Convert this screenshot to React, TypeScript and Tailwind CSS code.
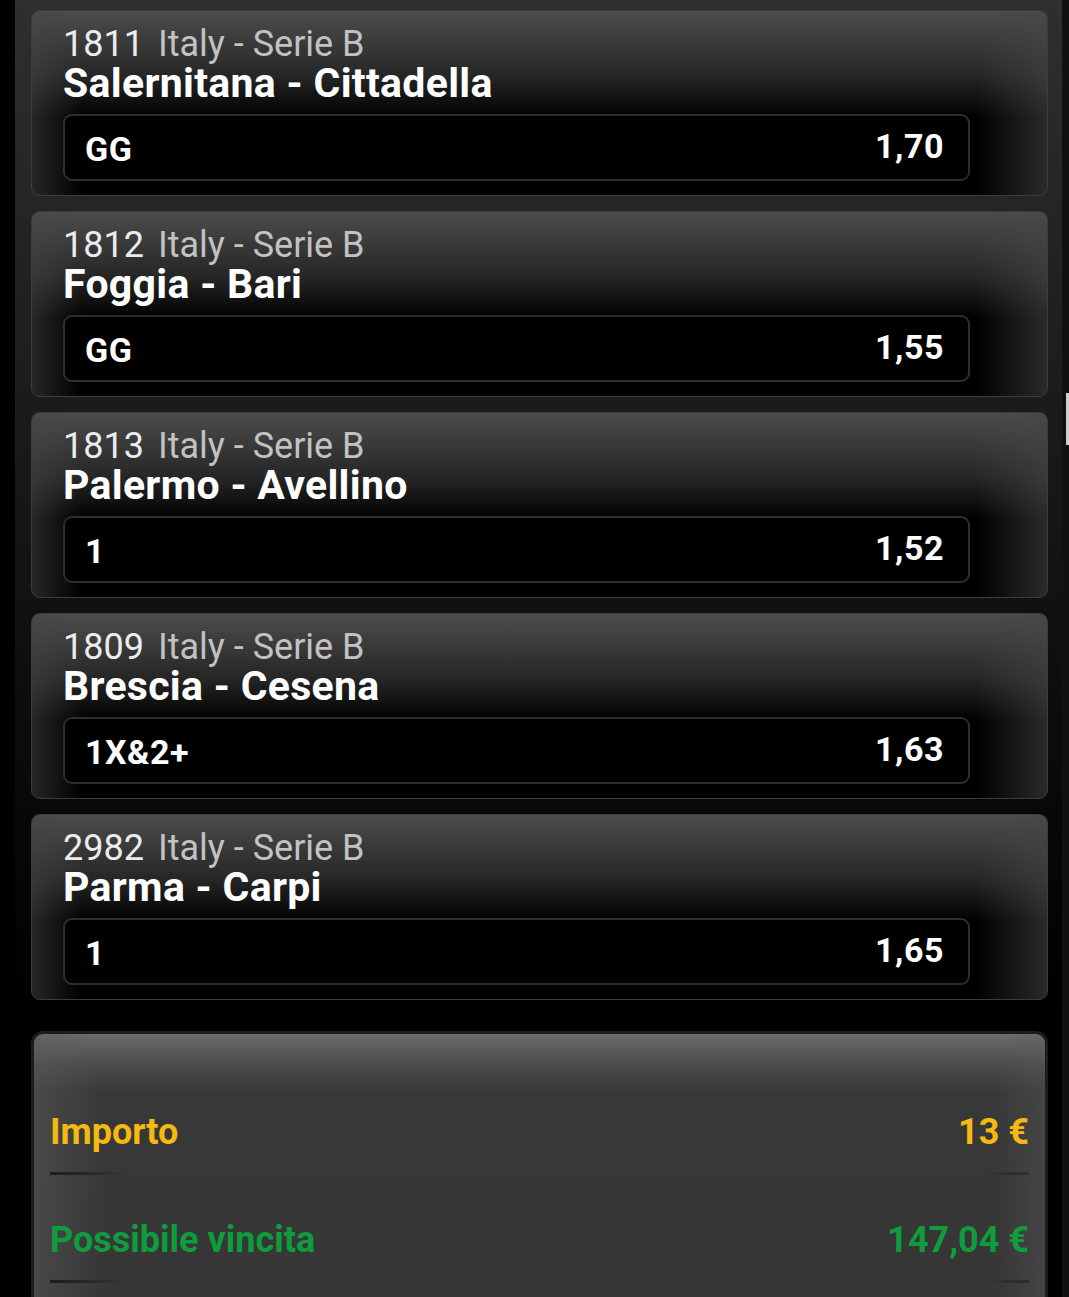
import React from "react";

type Bet = {
  code: string;
  league: string;
  match: string;
  pick: string;
  odd: string;
};

const bets: Bet[] = [
  { code: "1811", league: "Italy - Serie B", match: "Salernitana - Cittadella", pick: "GG", odd: "1,70" },
  { code: "1812", league: "Italy - Serie B", match: "Foggia - Bari", pick: "GG", odd: "1,55" },
  { code: "1813", league: "Italy - Serie B", match: "Palermo - Avellino", pick: "1", odd: "1,52" },
  { code: "1809", league: "Italy - Serie B", match: "Brescia - Cesena", pick: "1X&2+", odd: "1,63" },
  { code: "2982", league: "Italy - Serie B", match: "Parma - Carpi", pick: "1", odd: "1,65" },
];

function BetCard({ bet }: { bet: Bet }) {
  return (
    <div className="h-[186px] rounded-[9px] border border-[#3c3c3c] bg-[linear-gradient(to_right,rgba(70,70,70,0.55),rgba(0,0,0,0)_5%,rgba(0,0,0,0)_93%,rgba(70,70,70,0.6)),linear-gradient(to_bottom,#4c4c4c,#262626_35%,#000_58%,#000)] pl-[31px] pt-[15px]">
      <div className="flex items-baseline text-[36px] leading-[36px]">
        <span className="text-[#ececec]">{bet.code}</span>
        <span className="ml-[14px] text-[#c2c2c2]">{bet.league}</span>
      </div>
      <div className="text-[41px] font-bold leading-[42px] tracking-[0.3px] text-white">{bet.match}</div>
      <div className="mt-[10px] flex h-[67px] w-[907px] items-center justify-between rounded-[9px] border-2 border-[#2e2e2e] bg-black pl-[20px] pr-[24px] pt-[3px] text-[34px] font-bold tracking-[0.5px] text-white">
        <span>{bet.pick}</span>
        <span className="-mt-[5px]">{bet.odd}</span>
      </div>
    </div>
  );
}

function Separator() {
  return (
    <div className="mt-[18px] h-[3px] w-full bg-[linear-gradient(to_right,#1e1e1e,#242424_3%,rgba(0,0,0,0)_8%,rgba(0,0,0,0)_96%,#2c2c2c_98%,#2f2f2f)]" />
  );
}

export default function App() {
  return (
    <div
      className="relative flex h-[1297px] w-full overflow-hidden bg-black"
      style={{ fontFamily: "Roboto, 'Noto Sans', sans-serif" }}
    >
      <div className="w-[15px] shrink-0 bg-black" />
      <div className="flex w-[1047px] shrink-0 flex-col bg-[linear-gradient(to_bottom,#2f2f2f,#1c1c1c_30%,#0c0c0c_55%,#000_78%)] pl-[16px] pr-[14px]">
        <div className="flex flex-col gap-[15px] pt-[10px]">
          {bets.map((bet) => (
            <BetCard key={bet.code} bet={bet} />
          ))}
        </div>

        <div className="mt-[31px] flex-1 rounded-t-[12px] border-[3px] border-b-0 border-[#1c1c1c] bg-[linear-gradient(to_right,rgba(90,90,90,0.5),rgba(0,0,0,0)_7%,rgba(0,0,0,0)_95%,rgba(90,90,90,0.4)),linear-gradient(to_bottom,#6c6c6c,#4a4a4a_12%,#383838_22%,#363636)] px-[16px] pt-[76px]">
          <div className="flex items-center justify-between text-[36px] font-bold leading-[44px] text-[#f5b910]">
            <span>Importo</span>
            <span>13 €</span>
          </div>
          <Separator />
          <div className="mt-[43px] flex items-center justify-between text-[36px] font-bold leading-[44px] text-[#0e9c3d]">
            <span>Possibile vincita</span>
            <span>147,04 €</span>
          </div>
          <Separator />
        </div>
      </div>
      <div className="flex-1 bg-[#111]" />
      <div className="absolute right-0 top-[393px] h-[52px] w-[3px] bg-[#cfcfcf]" />
    </div>
  );
}
